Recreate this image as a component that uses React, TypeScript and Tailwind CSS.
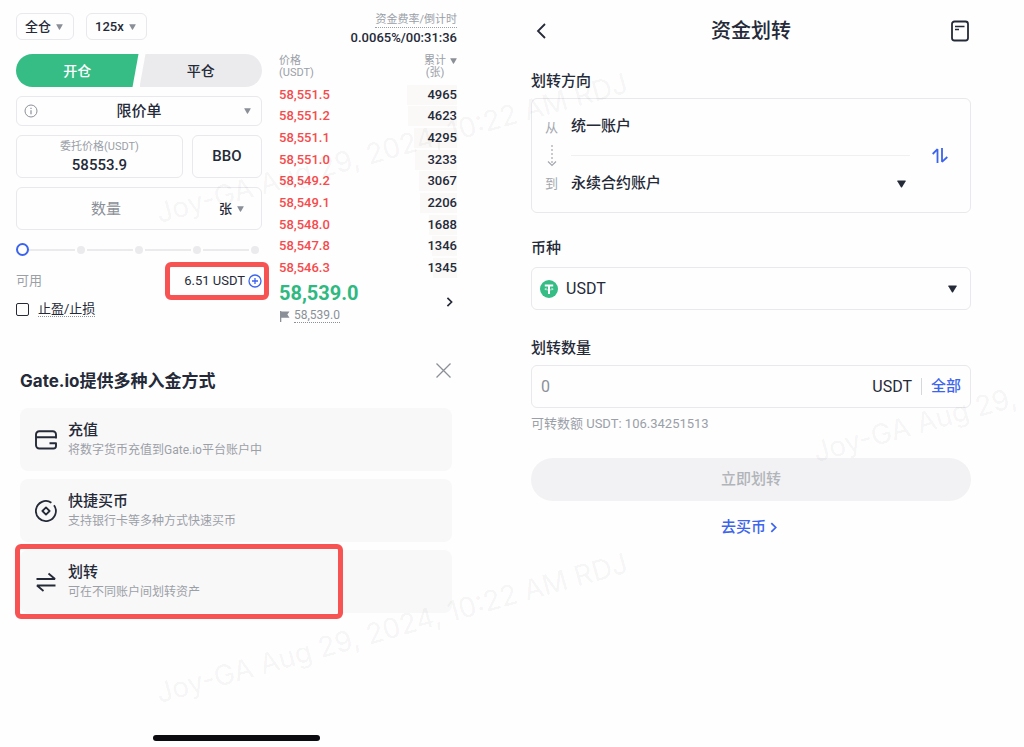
import React, { useState } from 'react'
import clsx from 'clsx'

const asks = [
  { price: '58,551.5', total: '4965', depth: 50 },
  { price: '58,551.2', total: '4623', depth: 49 },
  { price: '58,551.1', total: '4295', depth: 43 },
  { price: '58,551.0', total: '3233', depth: 42 },
  { price: '58,549.2', total: '3067', depth: 38 },
  { price: '58,549.1', total: '2206', depth: 37 },
  { price: '58,548.0', total: '1688', depth: 28 },
  { price: '58,547.8', total: '1346', depth: 25 },
  { price: '58,546.3', total: '1345', depth: 24 },
]

const Triangle = ({ className }: { className?: string }) => (
  <svg className={clsx('pointer-events-none', className)} viewBox="0 0 8 7" fill="currentColor" aria-hidden="true">
    <path d="M0.6 0.4h6.8q.6 0 .3.6L4.5 6.4q-.5.6-1 0L.3 1Q0 .4.6.4z" />
  </svg>
)

const Chevron = ({ className }: { className?: string }) => (
  <svg className={className} viewBox="0 0 8 12" fill="none" stroke="currentColor" strokeWidth="2" aria-hidden="true">
    <path d="M1.5 1l5 5-5 5" />
  </svg>
)

interface SelectProps {
  label: string
  options: string[]
  className?: string
  selectClass?: string
  arrowClass?: string
}

const Select: React.FC<SelectProps> = ({ label, options, className, selectClass, arrowClass }) => (
  <div className={clsx('relative flex items-center', className)}>
    <select aria-label={label} className={clsx('h-full w-full appearance-none bg-transparent outline-none', selectClass)}>
      {options.map((o) => (
        <option key={o}>{o}</option>
      ))}
    </select>
    <Triangle className={clsx('absolute', arrowClass)} />
  </div>
)

const Watermark = ({ className }: { className: string }) => (
  <div
    aria-hidden="true"
    className={clsx(
      'pointer-events-none absolute origin-bottom-left -rotate-[15.6deg] whitespace-nowrap font-[family-name:Inter] text-[28px] leading-8 text-black/5',
      className,
    )}
  >
    Joy-GA Aug 29, 2024, 10:22 AM RDJ
  </div>
)

const OrderForm = () => {
  const [percent, setPercent] = useState(0)
  const [price, setPrice] = useState('58553.9')

  return (
    <form className="min-w-0 flex-1">
      <div className="flex gap-3">
        <Select
          label="仓位模式"
          options={['全仓', '逐仓']}
          className="h-[27px] w-[58px] rounded-md border border-[#e9e9ed]"
          selectClass="pl-2 text-[13px] font-medium"
          arrowClass="right-[10px] h-[6px] w-[7px] text-[#8b9098]"
        />
        <Select
          label="杠杆"
          options={['125x', '100x', '50x']}
          className="h-[27px] w-[61px] rounded-md border border-[#e9e9ed]"
          selectClass="pl-2 text-[13px] font-medium"
          arrowClass="right-[10px] h-[6px] w-[7px] text-[#8b9098]"
        />
      </div>

      <div className="mt-[14px] flex h-[33px] gap-px text-sm font-medium">
        <button
          type="button"
          className="flex-1 rounded-l-full bg-[#35bd85] text-white [clip-path:polygon(0_0,100%_0,calc(100%-6px)_100%,0_100%)]"
        >
          开仓
        </button>
        <button
          type="button"
          className="flex-1 rounded-r-full bg-[#ebebee] [clip-path:polygon(6px_0,100%_0,100%_100%,0_100%)]"
        >
          平仓
        </button>
      </div>

      <div className="relative mt-[9px] h-[30px]">
        <Select
          label="订单类型"
          options={['限价单', '市价单']}
          className="h-full rounded-md border border-[#e9e9ed]"
          selectClass="text-[15px] font-medium [text-align-last:center]"
          arrowClass="right-[10px] h-[6px] w-[7px] text-[#8b9098]"
        />
        <svg className="pointer-events-none absolute left-2 top-2 size-[14px] text-[#8b9098]" viewBox="0 0 14 14" fill="none" stroke="currentColor">
          <circle cx="7" cy="7" r="6" />
          <path d="M7 6.2v4M7 3.8v1.2" strokeWidth="1.2" />
        </svg>
      </div>

      <div className="mt-[9px] flex h-[43px] gap-[9px]">
        <label className="flex min-w-0 flex-1 flex-col items-center justify-center rounded-md border border-[#e9e9ed]">
          <span className="text-[11px] leading-4 text-[#9ba0a8]">委托价格(USDT)</span>
          <input
            value={price}
            onChange={(e) => setPrice(e.target.value)}
            className="w-full bg-transparent text-center text-[15px] font-medium leading-5 outline-none"
          />
        </label>
        <button type="button" className="w-[70px] rounded-md border border-[#e9e9ed] text-[15px] font-medium">
          BBO
        </button>
      </div>

      <div className="mt-[9px] flex h-[43px] items-center rounded-md border border-[#e9e9ed]">
        <input
          aria-label="数量"
          placeholder="数量"
          className="h-full min-w-0 flex-1 bg-transparent text-center text-[15px] outline-none placeholder:text-[#8b9098]"
        />
        <Select
          label="单位"
          options={['张', '币']}
          className="h-full w-[66px]"
          selectClass="pl-6 text-[13px] font-medium"
          arrowClass="right-[17px] h-[6px] w-[7px] text-[#8b9098]"
        />
      </div>

      <div className="relative mt-[13px] h-[13px]">
        <div className="flex h-full items-center gap-[2px] px-[3px]">
          <span className="size-2 rounded-full bg-[#ebebee]" />
          {[25, 50, 75, 100].map((mark) => (
            <React.Fragment key={mark}>
              <span className="h-[2px] flex-1 bg-[#ebebee]" />
              <span className="size-2 rounded-full bg-[#ebebee]" />
            </React.Fragment>
          ))}
        </div>
        <input
          type="range"
          aria-label="仓位比例"
          min={0}
          max={100}
          value={percent}
          onChange={(e) => setPercent(Number(e.target.value))}
          className="absolute inset-0 h-full w-full appearance-none bg-transparent [&::-webkit-slider-thumb]:size-[13px] [&::-webkit-slider-thumb]:appearance-none [&::-webkit-slider-thumb]:rounded-full [&::-webkit-slider-thumb]:border-2 [&::-webkit-slider-thumb]:border-[#3c64ee] [&::-webkit-slider-thumb]:bg-white"
        />
      </div>

      <div className="mt-[15px] flex h-5 items-center justify-between text-[13px]">
        <span className="text-[#9ba0a8]">可用</span>
        <div className="relative flex items-center gap-[3px]">
          <span>6.51 USDT</span>
          <button type="button" aria-label="入金" className="text-[#3c64ee]">
            <svg className="size-[14px]" viewBox="0 0 14 14" fill="none" stroke="currentColor" strokeWidth="1.3">
              <circle cx="7" cy="7" r="6" />
              <path d="M7 4v6M4 7h6" />
            </svg>
          </button>
          <span className="pointer-events-none absolute -inset-y-[9px] -left-[19px] -right-[7px] rounded-md border-5 border-[#f75353]" />
        </div>
      </div>

      <label className="mt-2 flex h-5 items-center gap-[9px] text-[13px]">
        <input type="checkbox" className="size-[13px] appearance-none rounded-[2px] border border-[#252a38] checked:bg-[#3c64ee]" />
        <span className="border-b border-dotted border-[#8b9098] leading-[15px]">止盈/止损</span>
      </label>
    </form>
  )
}

const OrderBook = () => (
  <div className="w-[178px] text-[13px]">
    <div className="flex flex-col items-end">
      <span className="border-b border-dotted border-[#9ba0a8] text-[11px] leading-[14px] text-[#9ba0a8]">资金费率/倒计时</span>
      <span className="mt-[2px] leading-4 font-medium">0.0065%/00:31:36</span>
    </div>

    <table className="mt-[9px] w-full">
      <thead>
        <tr className="h-[29px] align-top text-[11px] leading-3 text-[#9ba0a8]">
          <th className="text-left font-normal">
            价格
            <br />
            (USDT)
          </th>
          <th className="font-normal">
            <div className="flex items-start justify-end gap-1">
              <span>
                累计
                <br />
                (张)
              </span>
              <Triangle className="mt-[3px] h-[6px] w-[7px] text-[#8b9098]" />
            </div>
          </th>
        </tr>
      </thead>
      <tbody className="font-medium">
        {asks.map((ask, i) => (
          <tr key={ask.price} className={clsx('leading-5', i % 3 === 0 ? 'h-[21px]' : 'h-[22px]')}>
            <td className="p-0 text-[#f54b4b]">{ask.price}</td>
            <td className="p-0 text-right">
              <div className="flex justify-end">
                <span className="flex justify-end bg-[#faf9f8]" style={{ width: ask.depth }}>
                  {ask.total}
                </span>
              </div>
            </td>
          </tr>
        ))}
      </tbody>
    </table>

    <div className="mt-[2px] flex items-center justify-between">
      <div>
        <div className="text-xl font-bold leading-6 text-[#2fb981]">58,539.0</div>
        <div className="mt-1 flex items-center gap-1 text-xs text-[#8b9098]">
          <svg className="size-[11px]" viewBox="0 0 11 11" fill="currentColor" aria-hidden="true">
            <path d="M1 0h1.3v11H1zM2 .5h8.5L8.4 3.6l2.1 3.1H2z" />
          </svg>
          <span className="border-b border-dotted border-[#8b9098] leading-[13px]">58,539.0</span>
        </div>
      </div>
      <button type="button" aria-label="盘口" className="mr-1">
        <Chevron className="h-[10px] w-[7px]" />
      </button>
    </div>
  </div>
)

const WalletIcon = () => (
  <svg className="size-[22px]" viewBox="0 0 22 22" fill="none" stroke="currentColor" strokeWidth="1.9" strokeLinejoin="round">
    <path d="M21 9.5v-4a3.2 3.2 0 0 0-3.2-3.2H4.2A3.2 3.2 0 0 0 1 5.5v10.8a3.2 3.2 0 0 0 3.2 3.2h14.3q2.5 0 2.5-2.5v-2.8h-6.5M1 8.3h20" />
  </svg>
)

const CoinIcon = () => (
  <svg className="size-[22px]" viewBox="0 0 22 22" fill="none" stroke="currentColor" strokeWidth="1.8">
    <path d="M16.4 2.7A10 10 0 1 0 19 5.2" />
    <path d="M11 7.4l3.6 3.6-3.6 3.6L7.4 11z" strokeLinejoin="round" />
  </svg>
)

const TransferIcon = () => (
  <svg className="size-[22px]" viewBox="0 0 22 22" fill="none" stroke="currentColor" strokeWidth="1.8">
    <path d="M1.5 8H20l-6.5-5.5M20.500 14.5H2L8.5 20" strokeLinejoin="bevel" />
  </svg>
)

const methods = [
  { title: '充值', desc: '将数字货币充值到Gate.io平台账户中', Icon: WalletIcon, marked: false },
  { title: '快捷买币', desc: '支持银行卡等多种方式快速买币', Icon: CoinIcon, marked: false },
  { title: '划转', desc: '可在不同账户间划转资产', Icon: TransferIcon, marked: true },
]

const DepositSheet = () => (
  <section className="mt-10 pl-1 pr-[5px]">
    <header className="flex justify-between">
      <h2 className="mt-[6px] font-[family-name:Inter,'Noto_Sans_CJK_SC',sans-serif] text-[17px] font-bold leading-6">
        Gate.io提供多种入金方式
      </h2>
      <button type="button" aria-label="关闭" className="mr-px size-[15px] text-[#8b9098]">
        <svg viewBox="0 0 15 15" fill="none" stroke="currentColor" strokeWidth="1.3">
          <path d="M.5.5l14 14M14.5.5l-14 14" />
        </svg>
      </button>
    </header>
    <ul className="mt-[15px] flex flex-col gap-2">
      {methods.map(({ title, desc, Icon, marked }) => (
        <li key={title} className="relative">
          <button type="button" className="flex h-[63px] w-full items-center gap-[11px] rounded-lg bg-[#f9f8f8] pl-[15px] pt-px text-left">
            <Icon />
            <span>
              <span className="block text-[15px] font-medium leading-5">{title}</span>
              <span className="block text-xs leading-5 text-[#9ba0a8]">{desc}</span>
            </span>
          </button>
          {marked && (
            <span className="pointer-events-none absolute -inset-y-[6px] -left-[5px] w-[76%] rounded-md border-5 border-[#f75353]" />
          )}
        </li>
      ))}
    </ul>
  </section>
)

const TransferPage = () => {
  const [amount, setAmount] = useState('')

  return (
    <main className="min-w-0 pl-[58px] pr-[53px] pt-[18px] text-[15px]">
      <header className="flex h-[26px] items-center justify-between">
        <button type="button" aria-label="返回" className="ml-[5px] w-4">
          <svg className="h-4 w-[10px]" viewBox="0 0 10 16" fill="none" stroke="currentColor" strokeWidth="1.8">
            <path d="M9 1L2 8l7 7" />
          </svg>
        </button>
        <h1 className="text-xl font-medium">资金划转</h1>
        <button type="button" aria-label="记录" className="mr-px">
          <svg className="h-[22px] w-5" viewBox="0 0 20 22" fill="none" stroke="currentColor" strokeWidth="1.8">
            <rect x="2" y="1.5" width="16" height="19" rx="2.5" />
            <path d="M5 6.5h9.5M5 9.5h4" strokeWidth="1.5" />
          </svg>
        </button>
      </header>

      <h2 className="mt-[27px] font-medium leading-5">划转方向</h2>
      <div className="mt-[7px] flex h-[115px] items-center rounded-md border border-[#e9e9ed]">
        <div className="flex w-[39px] flex-col items-center gap-[7px] text-[13px] leading-5 text-[#a3a7ae]">
          <span>从</span>
          <svg className="h-[22px] w-[10px]" viewBox="0 0 10 22" fill="none" stroke="currentColor" strokeWidth="1.2">
            <path d="M5 0v19" strokeDasharray="2 2" />
            <path d="M1 16.5l4 4 4-4" />
          </svg>
          <span>到</span>
        </div>
        <div className="min-w-0 flex-1">
          <div className="h-[39px] font-medium leading-5">统一账户</div>
          <hr className="border-[#f0f0f2]" />
          <Select
            label="转入账户"
            options={['永续合约账户', '现货账户']}
            className="mt-4 h-6"
            selectClass="font-medium"
            arrowClass="right-1 h-2 w-[9px]"
          />
        </div>
        <button type="button" aria-label="互换" className="mx-[22px] text-[#3c64ee]">
          <svg className="h-[15px] w-4" viewBox="0 0 16 15" fill="none" stroke="currentColor" strokeWidth="1.8">
            <path d="M.7 6L5.500 1.2V15M15.3 9L10 13.8V0" strokeLinejoin="bevel" />
          </svg>
        </button>
      </div>

      <h2 className="mt-[25px] font-medium leading-5">币种</h2>
      <div className="relative mt-[9px]">
        <Select
          label="币种"
          options={['USDT', 'BTC']}
          className="h-[43px] rounded-md border border-[#e9e9ed]"
          selectClass="pl-[34px] text-base"
          arrowClass="right-[13px] h-2 w-[9px]"
        />
        <svg className="pointer-events-none absolute left-[9px] top-[13px] size-[18px]" viewBox="0 0 18 18" fill="none">
          <circle cx="9" cy="9" r="9" fill="#35bd85" />
          <path d="M4.8 5.5h8.4M9 5.5V14" stroke="#fff" strokeWidth="2" />
          <path d="M6.8 8.2q-3 .7-1.8 1.3 4 1.2 8 0 1.2-.6-1.800-1.3" stroke="#fff" strokeWidth=".6" />
        </svg>
      </div>

      <label htmlFor="amount" className="mt-7 block font-medium leading-5">
        划转数量
      </label>
      <div className="mt-[7px] flex h-[43px] items-center rounded-md border border-[#e9e9ed] px-[9px]">
        <input
          id="amount"
          value={amount}
          onChange={(e) => setAmount(e.target.value)}
          placeholder="0"
          className="h-full min-w-0 flex-1 bg-transparent text-base outline-none placeholder:text-[#8b9098]"
        />
        <span className="text-base">USDT</span>
        <span className="mx-[9px] h-[17px] w-px bg-[#d5d7db]" />
        <button type="button" className="font-medium text-[#3c64ee]">
          全部
        </button>
      </div>
      <p className="mt-[6px] text-[13px] leading-5 text-[#9ba0a8]">可转数额 USDT: 106.34251513</p>

      <button type="button" disabled className="mt-6 h-[43px] w-full rounded-full bg-[#f2f2f4] font-medium text-[#b1b4b9]">
        立即划转
      </button>
      <a href="#buy" className="mt-4 flex items-center justify-center gap-1 pr-1 font-medium leading-5 text-[#3c64ee]">
        去买币
        <Chevron className="h-[11px] w-[7px]" />
      </a>
    </main>
  )
}

export default function App() {
  return (
    <div className="relative grid min-h-screen grid-cols-[473fr_551fr] overflow-hidden bg-[#fefefe] font-[family-name:Roboto,'Noto_Sans_CJK_SC',sans-serif] text-[#252a38]">
      <div className="flex min-w-0 flex-col px-4 pt-[13px]">
        <div className="flex gap-[17px]">
          <OrderForm />
          <OrderBook />
        </div>
        <DepositSheet />
        <div className="mx-auto mb-[6px] mt-auto h-[6px] w-[167px] rounded-full bg-[#0b0b10]" />
      </div>
      <TransferPage />

      <Watermark className="left-[161px] top-[197px]" />
      <Watermark className="left-[161px] top-[677px]" />
      <Watermark className="left-[818px] top-[436px]" />
    </div>
  )
}
